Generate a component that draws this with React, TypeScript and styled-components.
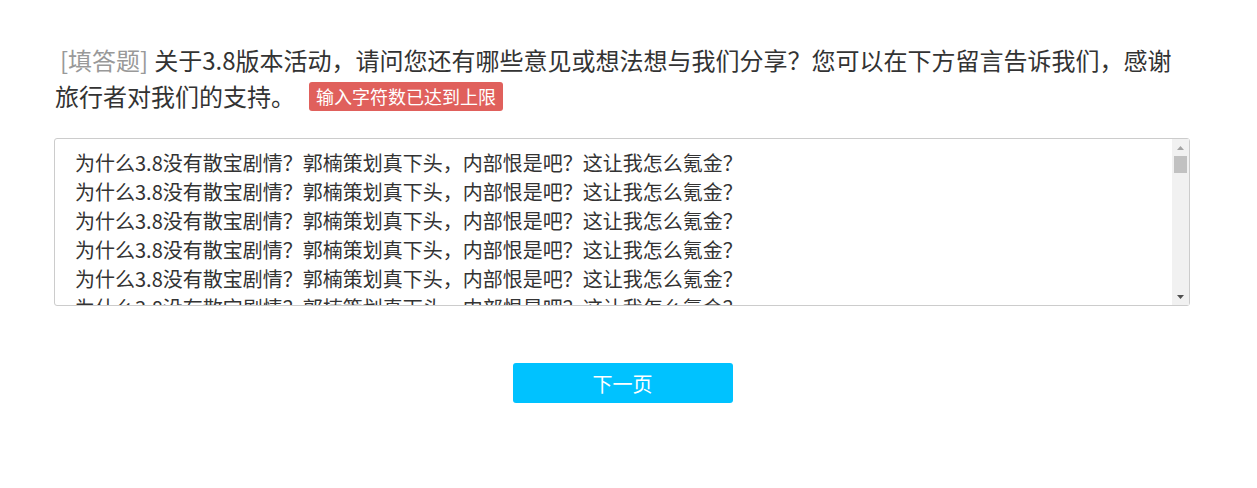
import React from "react";
import styled, { createGlobalStyle } from "styled-components";

const GlobalStyle = createGlobalStyle`
  html, body {
    margin: 0;
    padding: 0;
    background: #ffffff;
  }
  body {
    font-family: "Noto Sans CJK SC", "Noto Sans", sans-serif;
    color: #333333;
  }
`;

const Page = styled.div`
  width: 1257px;
  height: 488px;
  box-sizing: border-box;
  padding: 42px 0 0 55px;
`;

const Question = styled.div`
  width: 1135px;
  display: flex;
  flex-direction: column;
`;

const Title = styled.div`
  font-size: 24px;
  line-height: 36px;
  color: #333333;
  margin-right: 10px;
`;

const TypeLabel = styled.span`
  color: #999999;
  margin-left: 5px;
  margin-right: 6px;
`;

const LimitBadge = styled.span`
  display: inline-block;
  vertical-align: top;
  margin-top: 4px;
  margin-left: 14px;
  height: 29px;
  line-height: 29px;
  padding: 0 7px;
  border-radius: 3px;
  background: #e0605c;
  color: #ffffff;
  font-size: 18px;
`;

const AnswerBox = styled.div`
  position: relative;
  width: 1136px;
  height: 168px;
  margin: 24px 0 0 -1px;
`;

const Answer = styled.textarea`
  display: block;
  box-sizing: border-box;
  width: 100%;
  height: 100%;
  margin: 0;
  padding: 9px 37px 9px 20px;
  border: 1px solid #cccccc;
  border-radius: 3px;
  font-family: "Noto Sans CJK SC", "Noto Sans", sans-serif;
  font-size: 20px;
  line-height: 29px;
  color: #333333;
  resize: none;
  outline: none;
  overflow: hidden;
`;

const Scrollbar = styled.div`
  position: absolute;
  top: 1px;
  right: 1px;
  bottom: 1px;
  width: 17px;
  display: flex;
  flex-direction: column;
  background: #f1f1f1;
`;

const ScrollArrow = styled.div`
  height: 17px;
  display: flex;
  align-items: center;
  justify-content: center;
  flex: none;
`;

const ScrollTrack = styled.div`
  flex: 1;
  display: flex;
  flex-direction: column;
  align-items: center;
`;

const ScrollThumb = styled.div`
  width: 13px;
  height: 17px;
  background: #c1c1c1;
`;

const Actions = styled.div`
  display: flex;
  justify-content: center;
  margin-top: 57px;
`;

const NextButton = styled.button`
  width: 220px;
  height: 40px;
  border: 0;
  border-radius: 3px;
  background: #00c2ff;
  color: #ffffff;
  font-family: "Noto Sans CJK SC", "Noto Sans", sans-serif;
  font-size: 20px;
  cursor: pointer;
`;

const line = "为什么3.8没有散宝剧情？郭楠策划真下头，内部恨是吧？这让我怎么氪金？";
const answerText = Array.from({ length: 40 }, () => line).join("\n");

export default function App() {
  return (
    <>
      <GlobalStyle />
      <Page>
        <Question>
          <Title>
            <TypeLabel>[填答题]</TypeLabel>
            关于3.8版本活动，请问您还有哪些意见或想法想与我们分享？您可以在下方留言告诉我们，感谢旅行者对我们的支持。
            <LimitBadge>输入字符数已达到上限</LimitBadge>
          </Title>
          <AnswerBox>
            <Answer defaultValue={answerText} readOnly />
            <Scrollbar>
              <ScrollArrow>
                <svg width="7" height="4" viewBox="0 0 7 4">
                  <path d="M3.5 0 L7 4 L0 4 Z" fill="#a3a3a3" />
                </svg>
              </ScrollArrow>
              <ScrollTrack>
                <ScrollThumb />
              </ScrollTrack>
              <ScrollArrow>
                <svg width="7" height="4" viewBox="0 0 7 4">
                  <path d="M0 0 L7 0 L3.5 4 Z" fill="#505050" />
                </svg>
              </ScrollArrow>
            </Scrollbar>
          </AnswerBox>
          <Actions>
            <NextButton>下一页</NextButton>
          </Actions>
        </Question>
      </Page>
    </>
  );
}
